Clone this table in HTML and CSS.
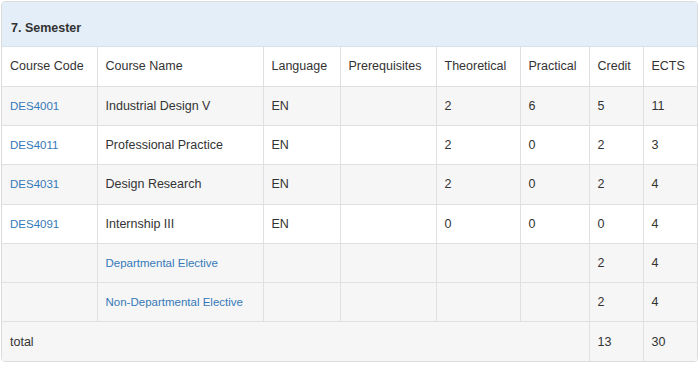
FILE: index.html
```html
<!DOCTYPE html>
<html>
<head>
<meta charset="utf-8">
<link rel="stylesheet" href="styles.css">
</head>
<body>
<div class="panel">
  <div class="panel-heading">7. Semester</div>
  <table class="courses">
    <colgroup>
      <col class="c1"><col class="c2"><col class="c3"><col class="c4"><col class="c5"><col class="c6"><col class="c7"><col class="c8">
    </colgroup>
    <tbody>
      <tr class="white">
        <td>Course Code</td><td>Course Name</td><td>Language</td><td>Prerequisites</td><td>Theoretical</td><td>Practical</td><td>Credit</td><td>ECTS</td>
      </tr>
      <tr class="gray">
        <td><a href="#">DES4001</a></td><td>Industrial Design V</td><td>EN</td><td></td><td>2</td><td>6</td><td>5</td><td>11</td>
      </tr>
      <tr class="white">
        <td><a href="#">DES4011</a></td><td>Professional Practice</td><td>EN</td><td></td><td>2</td><td>0</td><td>2</td><td>3</td>
      </tr>
      <tr class="gray">
        <td><a href="#">DES4031</a></td><td>Design Research</td><td>EN</td><td></td><td>2</td><td>0</td><td>2</td><td>4</td>
      </tr>
      <tr class="white">
        <td><a href="#">DES4091</a></td><td>Internship III</td><td>EN</td><td></td><td>0</td><td>0</td><td>0</td><td>4</td>
      </tr>
      <tr class="gray">
        <td></td><td><a href="#">Departmental Elective</a></td><td></td><td></td><td></td><td></td><td>2</td><td>4</td>
      </tr>
      <tr class="gray">
        <td></td><td><a href="#">Non-Departmental Elective</a></td><td></td><td></td><td></td><td></td><td>2</td><td>4</td>
      </tr>
      <tr class="gray last">
        <td colspan="6">total</td><td>13</td><td>30</td>
      </tr>
    </tbody>
  </table>
</div>
</body>
</html>
```
FILE: styles.css
```css
html, body {
  margin: 0;
  padding: 0;
  background: #fff;
}
body {
  font-family: "Liberation Sans", Arial, sans-serif;
  font-size: 12.5px;
  color: #333;
}
.panel {
  margin: 1px 0 0 1px;
  width: 697px;
  box-sizing: border-box;
  border: 1px solid #dcdcdc;
  border-radius: 4px;
  overflow: hidden;
}
.panel-heading {
  height: 45px;
  box-sizing: border-box;
  padding: 7px 9px 0;
  display: flex;
  align-items: center;
  background: #e3eef8;
  border-bottom: 1px solid #d6e2ec;
  font-weight: bold;
  font-size: 12.5px;
  color: #333;
}
.courses {
  width: 100%;
  border-collapse: collapse;
  table-layout: fixed;
}
.c1 { width: 95px; }
.c2 { width: 166px; }
.c3 { width: 77px; }
.c4 { width: 96px; }
.c5 { width: 84px; }
.c6 { width: 69px; }
.c7 { width: 54px; }
.c8 { width: auto; }
.courses td {
  height: 39.25px;
  box-sizing: border-box;
  padding: 0 8px;
  border: 1px solid #e0e0e0;
  vertical-align: middle;
  white-space: nowrap;
}
.courses tr:first-child td { border-top: 0; }
.courses tr.last td { border-bottom: 0; }
.courses td:first-child { border-left: 0; }
.courses td:last-child { border-right: 0; }
.white td { background: #fff; }
.gray td { background: #f6f6f6; }
a {
  color: #3579b8;
  font-size: 11.5px;
  text-decoration: none;
}
```
